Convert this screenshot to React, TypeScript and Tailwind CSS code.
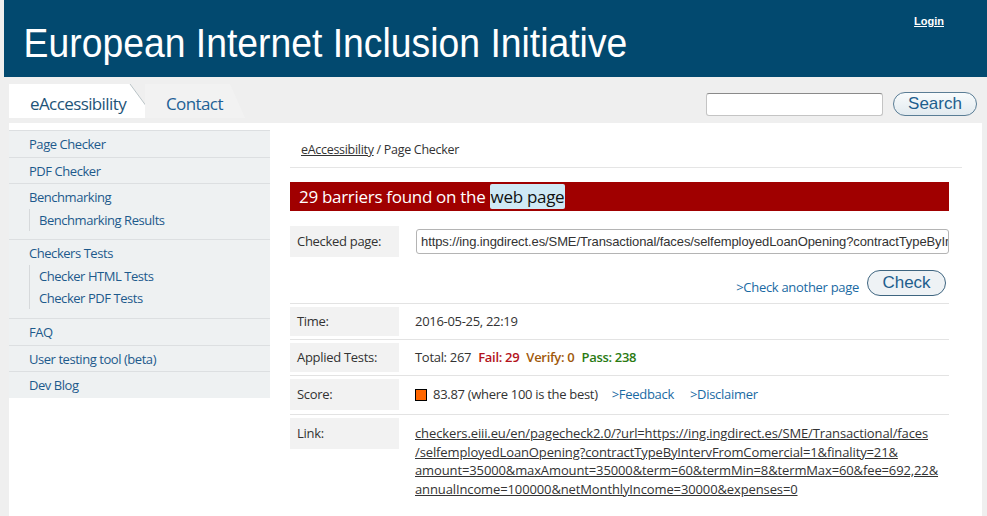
import React from 'react';

const sideLink = 'text-[#1d5a8c] text-[13px] tracking-[-0.45px] hover:underline cursor-pointer';

const Sidebar = () => {
  return (
    <div className="w-[261px] mt-[7px] bg-[#eef1f2] font-['Open_Sans',sans-serif] self-start">
      <div className="border-t border-[#dcdfe1] h-[27px] leading-[25px] pl-[20px]">
        <span className={sideLink}>Page Checker</span>
      </div>
      <div className="border-t border-[#dcdfe1] h-[26px] leading-[24px] pl-[20px]">
        <span className={sideLink}>PDF Checker</span>
      </div>
      {/* Benchmarking group */}
      <div className="border-t border-[#dcdfe1] pl-[20px] pb-[8px]">
        <div className="h-[25px] leading-[25px]">
          <span className={sideLink}>Benchmarking</span>
        </div>
        <div className="border-l border-[#d6d9db] pl-[9px]">
          <div className="h-[22px] leading-[21px]">
            <span className={sideLink}>Benchmarking Results</span>
          </div>
        </div>
      </div>
      {/* Checkers group */}
      <div className="border-t border-[#dcdfe1] pl-[20px] pb-[9px]">
        <div className="h-[25px] leading-[25px]">
          <span className={sideLink}>Checkers Tests</span>
        </div>
        <div className="border-l border-[#d6d9db] pl-[9px]">
          <div className="h-[22px] leading-[21px]">
            <span className={sideLink}>Checker HTML Tests</span>
          </div>
          <div className="h-[22px] leading-[21px]">
            <span className={sideLink}>Checker PDF Tests</span>
          </div>
        </div>
      </div>
      <div className="border-t border-[#dcdfe1] h-[27px] leading-[24px] pl-[20px]">
        <span className={sideLink}>FAQ</span>
      </div>
      <div className="border-t border-[#dcdfe1] h-[26px] leading-[24px] pl-[20px]">
        <span className={sideLink}>User testing tool (beta)</span>
      </div>
      <div className="border-t border-[#dcdfe1] h-[27px] leading-[24px] pl-[20px]">
        <span className={sideLink}>Dev Blog</span>
      </div>
    </div>
  );
};

const Row = ({ label, children }: { label: string; children: React.ReactNode }) => (
  <div className="flex border-t border-[#e3e3e3] py-[3px]">
    <div className="w-[109px] shrink-0 bg-[#f2f2f2] h-[29px] pl-[7px] flex items-center">
      <span>{label}</span>
    </div>
    <div className="pl-[16px] flex items-center">{children}</div>
  </div>
);

const App = () => {
  return (
    <div className="w-[987px] h-[516px] overflow-hidden bg-[#efefef] font-['Open_Sans',sans-serif] text-[#333]">
      {/* Header */}
      <div className="ml-[4px] h-[77px] bg-[#02496f] flex justify-between">
        <h1 className="pl-[21px] pt-[20px] text-white text-[40px] leading-[46px] whitespace-nowrap origin-left scale-x-[0.933] font-['Liberation_Sans',sans-serif]">
          European Internet Inclusion Initiative
        </h1>
        <div className="pr-[43px] pt-[7px]">
          <span className="text-white text-[11px] font-bold underline font-['Liberation_Sans',sans-serif]">Login</span>
        </div>
      </div>

      {/* Navigation bar */}
      <div className="h-[46px] flex items-start justify-between pl-[9px] pr-[10px]">
        <div className="flex mt-[7px] h-[34px]">
          <div className="relative w-[146px] h-[34px]">
            <div className="absolute inset-0 bg-white [clip-path:polygon(0_0,83%_0,100%_100%,0_100%)]" />
            <svg className="absolute inset-0" width="146" height="34">
              <line x1="121" y1="0" x2="146" y2="34" stroke="#b9c3c6" strokeWidth="1" />
            </svg>
            <span className="relative block pl-[21px] pt-[7px] leading-[26px] text-[17px] text-[#1e5478] tracking-[-0.6px]">eAccessibility</span>
          </div>
          <div className="relative w-[100px] h-[34px] -ml-[10px]">
            <div className="absolute inset-0 bg-[#f2f2f2] [clip-path:polygon(0_0,85%_0,100%_100%,0_100%)]" />
            <span className="relative block pl-[21px] pt-[7px] leading-[26px] text-[17px] text-[#1d6196] tracking-[-0.6px]">Contact</span>
          </div>
        </div>
        <div className="flex items-center gap-[10px] mt-[15px]">
          <input
            type="text"
            className="w-[177px] h-[23px] bg-white border border-[#c4c4c4] border-t-[#8a8a8a] rounded-[3px] outline-none"
          />
          <button className="w-[84px] h-[24px] rounded-full border border-[#5a7d95] bg-gradient-to-b from-[#f8fbfc] to-[#e2eaef] text-[#1d5e8d] text-[17px] leading-[20px] font-['Liberation_Sans',sans-serif]">
            Search
          </button>
        </div>
      </div>

      {/* Main */}
      <div className="ml-[9px] w-[973px] h-[393px] bg-white flex">
        <Sidebar />

        <div className="ml-[20px] w-[672px] text-[13px] tracking-[-0.3px]">
          {/* Breadcrumb */}
          <div className="w-[672px] border-b border-[#e5e5e5] h-[45px] pl-[11px] pt-[18px] leading-[18px] text-[12.5px]">
            <span className="underline">eAccessibility</span>
            <span> / Page Checker</span>
          </div>

          <div className="w-[659px]">
            {/* Banner */}
            <div className="mt-[14px] h-[29px] bg-[#a00000] flex items-center pl-[9px] text-white text-[17px]">
              <span>29 barriers found on the&nbsp;</span>
              <span className="bg-[#cfe9f5] text-[#111] h-[25px] leading-[25px] px-[1px] rounded-[2px]">web page</span>
            </div>

            {/* Checked page */}
            <div className="flex mt-[15px] items-center">
              <div className="w-[109px] h-[31px] bg-[#f2f2f2] pl-[7px] flex items-center shrink-0">Checked page:</div>
              <input
                readOnly
                value="https://ing.ingdirect.es/SME/Transactional/faces/selfemployedLoanOpening?contractTypeByIntervFromComercial=1"
                className="ml-[17px] flex-1 min-w-0 h-[25px] border border-[#b4b4b4] rounded-[3px] pl-[4px] outline-none font-['Liberation_Sans',sans-serif] text-[13px] text-[#333] tracking-[-0.1px]"
              />
            </div>

            <div className="flex justify-end items-end gap-[8px] pr-[3px] mt-[12px] h-[26px] mb-[8px]">
              <span className="text-[#1a6aa3] leading-[16px]">&gt;Check another page</span>
              <button className="w-[79px] h-[26px] rounded-full border border-[#3e6580] bg-[#eef2f5] text-[#1d5e8d] text-[17px] leading-[20px] tracking-normal font-['Liberation_Sans',sans-serif] mb-[-1px]">
                Check
              </button>
            </div>

            <Row label="Time:">2016-05-25, 22:19</Row>
            <Row label="Applied Tests:">
              <span>Total: 267</span>
              <span className="ml-[7px] text-[#b3121b] font-semibold">Fail: 29</span>
              <span className="ml-[7px] text-[#a0580a] font-semibold">Verify: 0</span>
              <span className="ml-[7px] text-[#2a7a12] font-semibold">Pass: 238</span>
            </Row>
            <div className="flex border-t border-[#e3e3e3] pt-[3px] pb-[4px]">
              <div className="w-[109px] shrink-0 bg-[#f2f2f2] h-[31px] pl-[7px] flex items-center">Score:</div>
              <div className="pl-[16px] flex items-center">
                <span className="inline-block w-[12px] h-[12px] bg-[#ff6600] border border-black mr-[6px]" />
                <span>83.87 (where 100 is the best)</span>
                <span className="ml-[14px] text-[#1a6aa3]">&gt;Feedback</span>
                <span className="ml-[16px] text-[#1a6aa3]">&gt;Disclaimer</span>
              </div>
            </div>
            <div className="flex border-t border-[#e3e3e3] pt-[3px]">
              <div className="w-[109px] shrink-0 bg-[#f2f2f2] h-[31px] pl-[7px] pt-[6px]">Link:</div>
              <div className="pl-[16px] pt-[6px] leading-[18.5px] tracking-[-0.12px]">
                <span className="underline block">checkers.eiii.eu/en/pagecheck2.0/?url=https://ing.ingdirect.es/SME/Transactional/faces</span>
                <span className="underline block">/selfemployedLoanOpening?contractTypeByIntervFromComercial=1&amp;finality=21&amp;</span>
                <span className="underline block">amount=35000&amp;maxAmount=35000&amp;term=60&amp;termMin=8&amp;termMax=60&amp;fee=692,22&amp;</span>
                <span className="underline block">annualIncome=100000&amp;netMonthlyIncome=30000&amp;expenses=0</span>
              </div>
            </div>
          </div>
        </div>
      </div>
    </div>
  );
};

export default App;
